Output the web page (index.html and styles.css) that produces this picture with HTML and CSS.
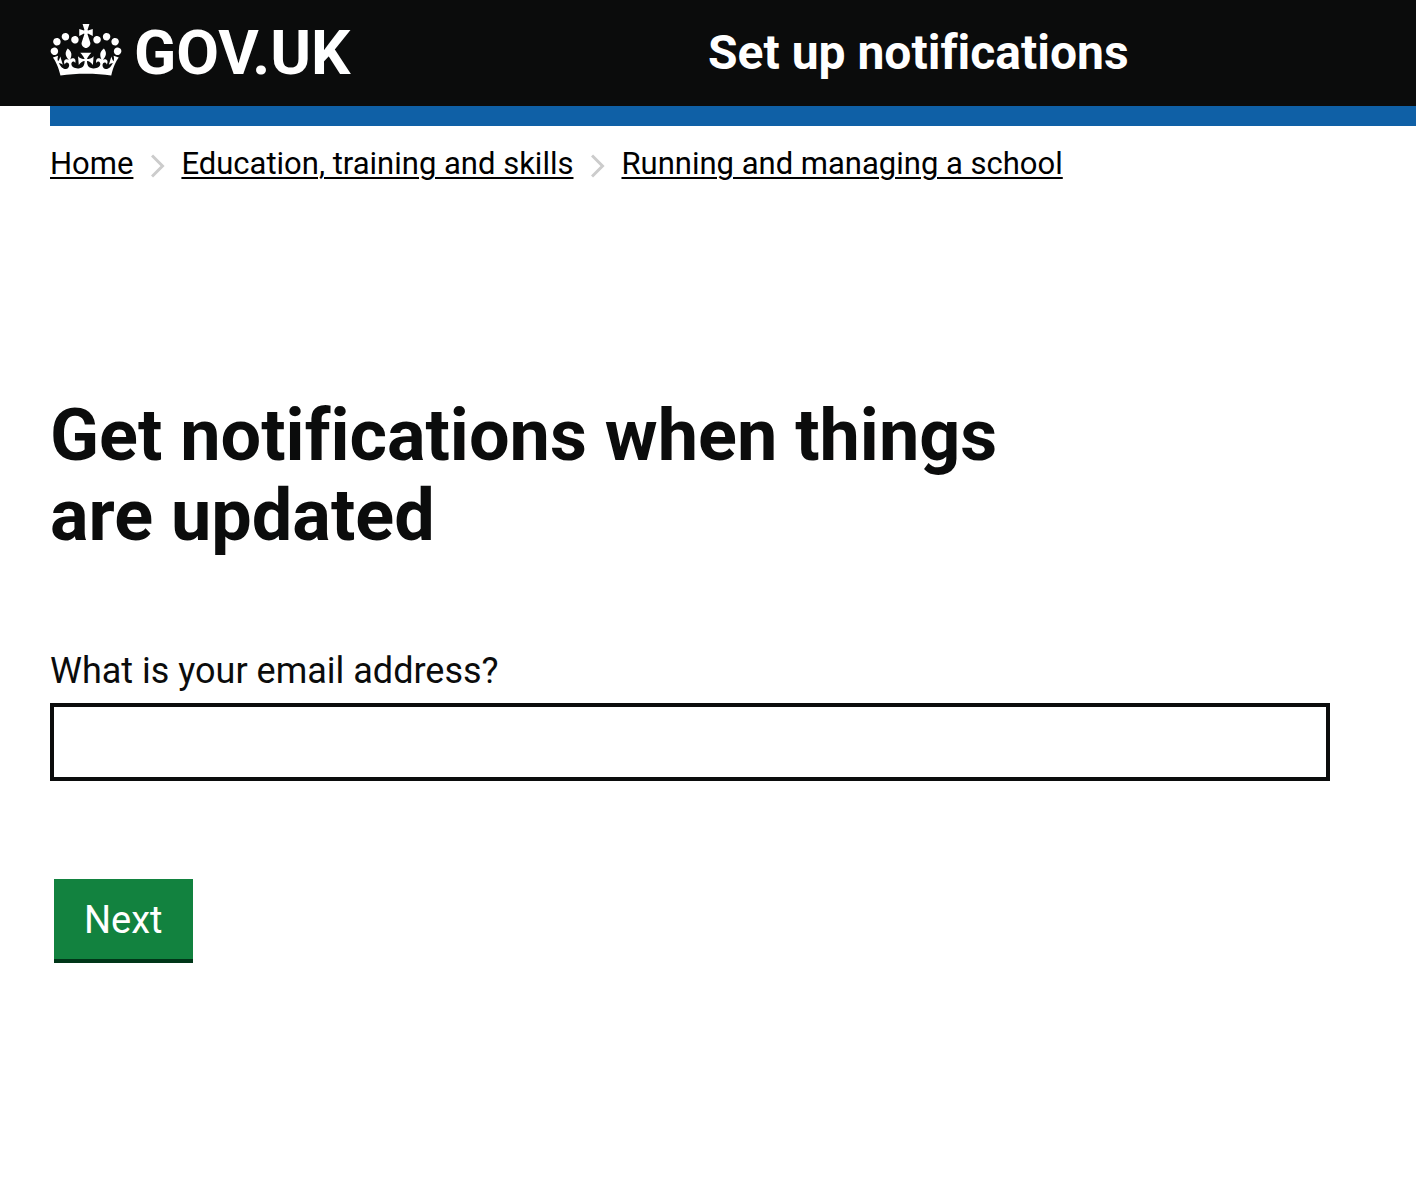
FILE: index.html
```html
<!DOCTYPE html>
<html lang="en">
<head>
  <meta charset="utf-8">
  <meta name="viewport" content="width=device-width, initial-scale=1">
  <title>Set up notifications - GOV.UK</title>
  <link rel="stylesheet" href="styles.css">
</head>
<body>
  <header class="header">
    <div class="header-inner">
      <a class="logo" href="#">
        <svg class="crown" viewBox="0 0 132 97" aria-hidden="true" fill="currentColor" fill-rule="evenodd">
          <path d="M25 30.2c3.5 1.5 7.7-.2 9.1-3.7 1.5-3.6-.2-7.8-3.9-9.2-3.6-1.4-7.6.3-9.1 3.9-1.4 3.5.3 7.5 3.9 9zM9 39.5c3.6 1.5 7.8-.2 9.2-3.7 1.5-3.6-.2-7.8-3.9-9.1-3.6-1.5-7.6.2-9.1 3.8-1.4 3.5.3 7.5 3.8 9zM4.4 57.2c3.5 1.5 7.7-.2 9.1-3.8 1.5-3.6-.2-7.7-3.9-9.1-3.5-1.5-7.6.3-9.1 3.8-1.4 3.5.3 7.6 3.9 9.1zm38.3-21.4c3.5 1.5 7.7-.2 9.1-3.8 1.5-3.6-.2-7.7-3.9-9.1-3.6-1.5-7.6.3-9.1 3.8-1.3 3.6.4 7.7 3.9 9.1zm64.4-5.6c-3.6 1.5-7.8-.2-9.1-3.7-1.5-3.6.2-7.8 3.8-9.2 3.6-1.4 7.7.3 9.2 3.9 1.3 3.5-.4 7.5-3.9 9zm15.9 9.3c-3.6 1.5-7.7-.2-9.1-3.7-1.5-3.6.2-7.8 3.7-9.1 3.6-1.5 7.7.2 9.2 3.8 1.5 3.5-.3 7.5-3.8 9zm4.7 17.7c-3.6 1.5-7.8-.2-9.2-3.8-1.5-3.6.2-7.7 3.9-9.1 3.6-1.5 7.7.3 9.2 3.8 1.3 3.5-.4 7.6-3.9 9.1zM89.3 35.8c-3.6 1.5-7.8-.2-9.2-3.8-1.4-3.6.2-7.7 3.9-9.1 3.6-1.5 7.7.3 9.2 3.8 1.4 3.6-.3 7.7-3.9 9.1zM69.7 17.7l8.9 4.7V9.3l-8.9 2.8c-.2-.3-.5-.6-.9-.9L72.4 0H59.6l3.5 11.2c-.3.3-.6.5-.9.9l-8.8-2.8v13.1l8.8-4.7c.3.3.6.7.9.9l-5 15.4v.1c-.2.8-.4 1.6-.4 2.4 0 4.1 3.1 7.5 7 8.1h.2c.3 0 .7.1 1 .1.4 0 .7 0 1-.1h.2c4-.6 7.1-4.1 7.1-8.1 0-.8-.1-1.7-.4-2.4V34l-5.1-15.4c.4-.2.7-.6 1-.9zM66 92.8c16.9 0 32.8 1.1 47.1 3.2 4-16.9 8.9-26.7 14-33.5l-9.6-3.4c1 4.9 1.1 7.2 0 10.2-1.5-1.4-3-4.3-4.2-8.7L108.6 76c2.8-2 5-3.2 7.5-3.3-4.4 9.4-10 11.9-13.6 11.2-4.3-.8-6.3-4.6-5.6-7.9 1-4.7 5.7-5.9 8-.5 4.3-8.7-3-11.4-7.6-8.8 7.1-7.2 7.9-13.5 2.1-21.1-8 6.1-8.1 12.3-4.5 20.8-4.7-5.4-12.1-2.5-9.5 6.2 3.4-5.2 7.9-2 7.2 3.1-.6 4.3-6.4 7.8-13.5 7.2-10.3-.9-10.9-8-11.2-13.8 2.5-.5 7.1 1.8 11 7.3L80.2 60c-4.1 4.4-8 5.3-12.3 5.4 1.4-4.4 8-11.6 8-11.6H55.5s6.4 7.2 7.9 11.6c-4.2-.1-8-1-12.3-5.4l1.4 16.4c3.9-5.5 8.5-7.7 10.9-7.3-.3 5.8-.9 12.8-11.1 13.8-7.2.6-12.9-2.9-13.5-7.2-.7-5 3.8-8.3 7.1-3.1 2.7-8.7-4.6-11.6-9.4-6.2 3.7-8.5 3.6-14.7-4.6-20.8-5.8 7.6-5 13.9 2.2 21.1-4.7-2.6-11.9.1-7.7 8.8 2.3-5.5 7.1-4.2 8.1.5.7 3.3-1.3 7.1-5.7 7.9-3.5.7-9-1.8-13.5-11.2 2.5.1 4.7 1.3 7.5 3.3l-4.7-15.4c-1.2 4.4-2.7 7.2-4.3 8.7-1.1-3-.9-5.3 0-10.2l-9.5 3.4c5 6.9 9.9 16.7 14 33.5 14.8-2.1 30.8-3.2 47.7-3.2z"/>
        </svg>
        <span class="logo-text">GOV.UK</span>
      </a>
      <a class="service-name" href="#">Set up notifications</a>
    </div>
  </header>

  <div class="container">
    <nav class="breadcrumbs" aria-label="Breadcrumb">
      <ol class="breadcrumbs-list">
        <li class="breadcrumbs-item"><a class="breadcrumbs-link" href="#">Home</a></li>
        <li class="breadcrumbs-item">
          <svg class="chevron" viewBox="0 0 14 24" aria-hidden="true"><path d="M1 1.500L11.500 12L1 22.500"/></svg>
          <a class="breadcrumbs-link" href="#">Education, training and skills</a>
        </li>
        <li class="breadcrumbs-item">
          <svg class="chevron" viewBox="0 0 14 24" aria-hidden="true"><path d="M1 1.500L11.500 12L1 22.500"/></svg>
          <a class="breadcrumbs-link" href="#">Running and managing a school</a>
        </li>
      </ol>
    </nav>

    <main class="main">
      <h1 class="heading">Get notifications when things are updated</h1>
      <form class="form">
        <label class="label" for="email">What is your email address?</label>
        <input class="input" id="email" name="email" type="email">
        <button class="button" type="button">Next</button>
      </form>
    </main>
  </div>
</body>
</html>
```
FILE: styles.css
```css
* {
  box-sizing: border-box;
}

body {
  margin: 0;
  background: #fff;
  color: #0b0c0c;
  font-family: Roboto, "Liberation Sans", sans-serif;
  font-variant-ligatures: none;
}

.header {
  background: #0b0c0c;
}

.header-inner {
  display: grid;
  grid-template-columns: 1fr 1fr;
  align-items: center;
  padding: 13px 0;
}

.logo,
.service-name {
  color: #fff;
  font-weight: 700;
  text-decoration: none;
}

.logo {
  display: flex;
  align-items: center;
  gap: 12px;
  padding-left: 50px;
  font-size: 62px;
  line-height: 80px;
}

.crown {
  width: 72px;
  height: 52px;
  margin-bottom: 6px;
}

.service-name {
  font-size: 48px;
  line-height: 80px;
}

.container {
  margin-left: 50px;
  border-top: 20px solid #0f60a6;
}

.breadcrumbs {
  padding: 18px 0 16px;
}

.breadcrumbs-list {
  display: flex;
  flex-wrap: wrap;
  gap: 18px;
  margin: 0;
  padding: 0;
  list-style: none;
  font-size: 31px;
  line-height: 40px;
}

.breadcrumbs-item {
  display: flex;
  align-items: center;
  gap: 16px;
}

.breadcrumbs-link {
  color: #000;
  text-decoration-thickness: 2px;
  text-underline-offset: 3px;
}

.chevron {
  width: 14px;
  height: 24px;
  margin-top: 4px;
  fill: none;
  stroke: #ccc;
  stroke-width: 3;
}

.main {
  padding: 196px 86px 60px 0;
}

.heading {
  max-width: 1000px;
  margin: 0 0 90px;
  font-size: 72px;
  font-weight: 700;
  line-height: 80px;
}

.form {
  display: flex;
  flex-direction: column;
  align-items: flex-start;
}

.label {
  margin-bottom: 7px;
  font-size: 36px;
  line-height: 50px;
}

.input {
  width: 100%;
  height: 78px;
  padding: 8px;
  border: 4px solid #0b0c0c;
  border-radius: 0;
  background: #fff;
  color: #0b0c0c;
  font: inherit;
  font-size: 36px;
}

.button {
  margin: 98px 4px 0;
  padding: 16px 30px 14px;
  border: 0;
  border-bottom: 4px solid #003618;
  background: #12823f;
  color: #fff;
  font: inherit;
  font-size: 38px;
  line-height: 50px;
}
```
